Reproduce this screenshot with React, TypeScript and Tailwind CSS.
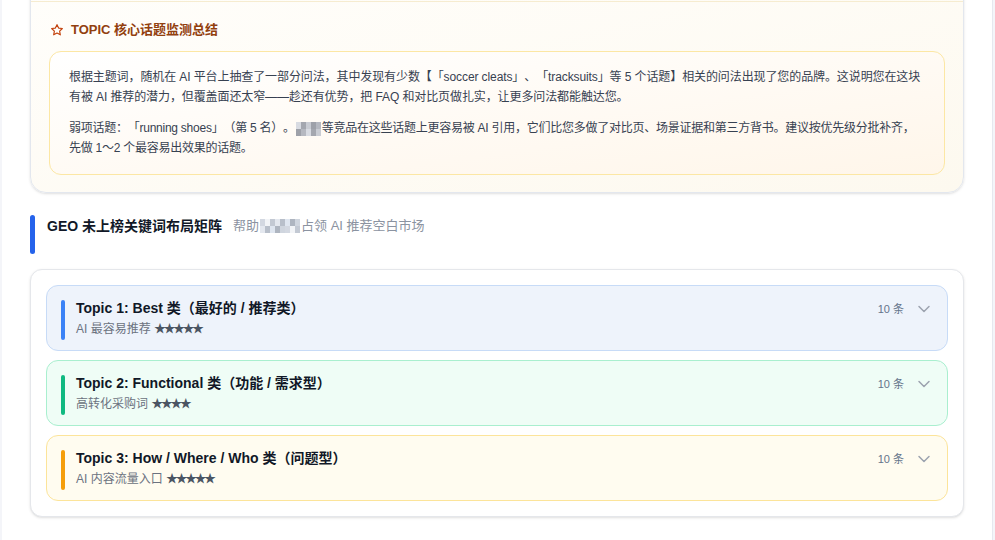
import React from "react";

const font = { fontFamily: '"Liberation Sans", "Noto Sans CJK SC", sans-serif' };

function Mosaic({ cells, w = 5 }: { cells: string[]; w?: number }) {
  return (
    <span className="inline-flex align-middle h-[14px] mx-px">
      {cells.map((c, i) => (
        <span key={i} className="h-full flex flex-col" style={{ width: w }}>
          <span className="h-1/2" style={{ background: c }} />
          <span className="h-1/2" style={{ background: cells[(i + 3) % cells.length] }} />
        </span>
      ))}
    </span>
  );
}

function Star() {
  return (
    <svg width="14" height="14" viewBox="0 0 24 24" fill="none" stroke="#c2410c" strokeWidth="2" strokeLinejoin="round">
      <path d="M12 2.8l2.8 5.9 6.4.8-4.7 4.4 1.2 6.4L12 17.2l-5.7 3.1 1.2-6.4-4.7-4.4 6.4-.8z" />
    </svg>
  );
}

function Chevron() {
  return (
    <svg width="20" height="20" viewBox="0 0 24 24" fill="none" stroke="#9ca3af" strokeWidth="1.8" strokeLinecap="round" strokeLinejoin="round">
      <path d="M6 9l6 6 6-6" />
    </svg>
  );
}

function Stars({ n }: { n: number }) {
  return (
    <span className="text-[12px] leading-none tracking-[-2.5px] text-[#4b5563]" style={{ fontFamily: '"Noto Sans CJK SC", sans-serif' }}>
      {"★".repeat(n)}
    </span>
  );
}

const topics = [
  {
    title: "Topic 1: Best 类（最好的 / 推荐类）",
    sub: "AI 最容易推荐",
    n: 5,
    box: "border-[#c7dbf7] bg-[#eef3fb]",
    bar: "bg-[#3b82f6]",
  },
  {
    title: "Topic 2: Functional 类（功能 / 需求型）",
    sub: "高转化采购词",
    n: 4,
    box: "border-[#a9efcf] bg-[#effdf6]",
    bar: "bg-[#10b981]",
  },
  {
    title: "Topic 3: How / Where / Who 类（问题型）",
    sub: "AI 内容流量入口",
    n: 5,
    box: "border-[#fce49a] bg-[#fffcf0]",
    bar: "bg-[#f59e0b]",
  },
];

export default function App() {
  return (
    <div className="min-h-screen w-[995px] bg-[#f4f5f9] overflow-hidden [text-spacing-trim:space-all]" style={font}>
      <div className="ml-[2px] w-[991px] min-h-[540px] bg-white border-r border-[#e6e8ef] px-7 flex flex-col">
        {/* Top summary card */}
        <div className="-mt-6 rounded-b-2xl border border-[#e3e7ee] bg-gradient-to-br from-[#fffefb] to-[#fdf9ef] shadow-sm">
          <div className="h-[25px] border-b border-[#f6ecd0]" />
          <div className="px-[18px] pt-[18px] pb-[17px]">
            <div className="flex items-center gap-[7px] h-[20px]">
              <span className="pl-[1px] flex"><Star /></span>
              <span className="text-[13px] font-bold text-[#92400e]">TOPIC 核心话题监测总结</span>
            </div>
            <div className="mt-[11px] rounded-xl border border-[#fce7a4] bg-gradient-to-br from-white to-[#fff6ea] px-[19px] pt-[15px] pb-[16px] text-[12px] leading-[20px] text-[#374151]">
              <p className="tracking-[-0.1px]">
                根据主题词，随机在 AI 平台上抽查了一部分问法，其中发现有少数【「soccer cleats」、「tracksuits」等 5 个话题】相关的问法出现了您的品牌。这说明您在这块
                <br />
                有被 AI 推荐的潜力，但覆盖面还太窄——趁还有优势，把 FAQ 和对比页做扎实，让更多问法都能触达您。
              </p>
              <p className="mt-[11px] tracking-[-0.25px] whitespace-nowrap">
                弱项话题：「running shoes」（第 5 名）。
                <Mosaic cells={["#d8dbe2", "#a4a7af", "#c9ccd3", "#9ea1a9", "#b5b8c0"]} />
                等竞品在这些话题上更容易被 AI 引用，它们比您多做了对比页、场景证据和第三方背书。建议按优先级分批补齐，
                <br />
                先做 1～2 个最容易出效果的话题。
              </p>
            </div>
          </div>
        </div>

        {/* Section header */}
        <div className="mt-[22px] flex items-start gap-[12px] h-[39px]">
          <div className="w-[5px] h-[39px] rounded-full bg-[#2563eb]" />
          <div className="flex items-center h-[22px] gap-[11px]">
            <span className="text-[14px] font-bold text-[#111827]">GEO 未上榜关键词布局矩阵</span>
            <span className="text-[13px] text-[#8b93a1] flex items-center">
              帮助
              <Mosaic w={5} cells={["#d3d8e1", "#f2f4f7", "#c3c9d3", "#e4e8ef", "#b8bfca", "#dfe6f0", "#aeb5c0", "#cfd5de"]} />
              占领 AI 推荐空白市场
            </span>
          </div>
        </div>

        {/* Topic list */}
        <div className="mt-[15px] rounded-xl border border-[#e5e7eb] bg-white shadow-sm p-[15px] flex flex-col gap-[9px]">
          {topics.map((t) => (
            <div key={t.title} className={`rounded-xl border ${t.box} pl-[14px] pr-[13px] pt-[12px] pb-[10px] flex items-start`}>
              <div className={`w-[4px] h-[40px] mt-[2px] rounded-full ${t.bar}`} />
              <div className="ml-[11px] flex-1">
                <div className="text-[14px] leading-[20px] font-bold text-[#111827]">{t.title}</div>
                <div className="mt-[2px] text-[12px] leading-[19px] h-[19px] text-[#6b7280]">
                  {t.sub} <Stars n={t.n} />
                </div>
              </div>
              <div className="flex items-center h-[20px] gap-[10px] mt-[1px]">
                <span className="text-[11px] text-[#64748b]">10 条</span>
                <Chevron />
              </div>
            </div>
          ))}
        </div>
      </div>
    </div>
  );
}
